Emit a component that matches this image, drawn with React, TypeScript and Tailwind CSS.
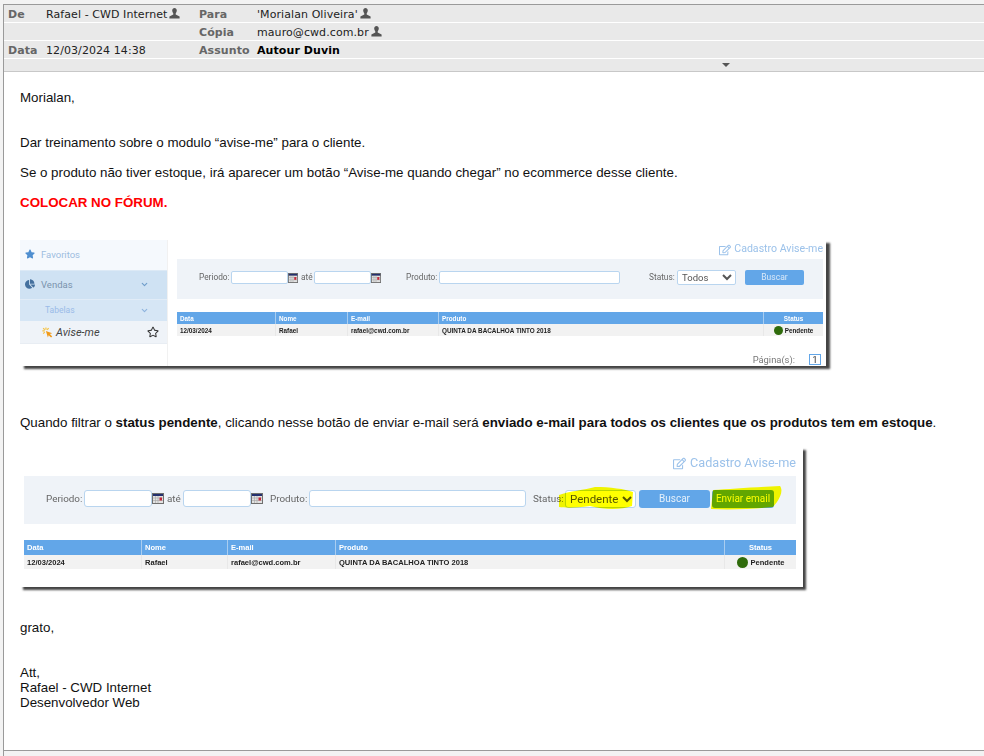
import { FaStar, FaRegStar, FaChartPie, FaRegEdit } from "react-icons/fa";
import { ChevronDown } from "lucide-react";

function UserIcon() {
  return (
    <svg width="11" height="11" viewBox="0 0 11 11" className="ml-[2px] mb-[2px] inline-block text-[#555]">
      <path
        d="M3.2 2.6C3.2 1 4.2 0 5.500 0s2.300 1 2.300 2.600c0 1.200-.6 2.200-1.100 2.800v1.100L10.600 8.400V10.600H.4V8.400L4.300 6.500V5.400C3.800 4.800 3.200 3.800 3.200 2.600z"
        fill="currentColor"
      />
    </svg>
  );
}

function CalendarIcon({ className }: { className: string }) {
  return (
    <svg viewBox="0 0 12 11" preserveAspectRatio="none" className={`shrink-0 ${className}`}>
      <rect x="0" y="0" width="12" height="11" fill="#6f6f6f" />
      <rect x="1" y="1" width="10" height="2" fill="#24306e" />
      <rect x="1" y="3" width="10" height="7" fill="#e2e2e2" />
      <path d="M1 5h10M1 7.500h10M3.500 3v7M6 3v7" stroke="#a5a5a5" strokeWidth="0.6" />
      <rect x="7.500" y="4.500" width="2.500" height="3" fill="#c4283a" />
    </svg>
  );
}

function ClickIcon() {
  return (
    <svg width="11" height="11" viewBox="0 0 14 14" className="shrink-0">
      <path
        d="M5 0.500v3M0.500 5h3M1.500 1.500l2 2M8.500 1.500l-2 2M1.500 8.500l2-2"
        stroke="#f5c242"
        strokeWidth="1.500"
        fill="none"
      />
      <path d="M5 5l8 3-3 1 3 3-1.500 1.500-3-3-1 3z" fill="#f09a1a" />
    </svg>
  );
}

function HeaderRow({
  label,
  value,
  label2,
  value2,
  user,
  user2,
  bold,
}: {
  label?: string;
  value?: string;
  label2: string;
  value2: string;
  user?: boolean;
  user2?: boolean;
  bold?: boolean;
}) {
  return (
    <div className="flex h-[18px] items-center border-b border-white bg-[#e9e9e9] pt-[1px] text-[11px] leading-none tracking-[0.08px]">
      <span className="w-[42px] pl-[4px] font-bold text-[#666]">{label}</span>
      <span className="w-[153px] whitespace-nowrap text-[#222]">
        {value}
        {user && <UserIcon />}
      </span>
      <span className="w-[58px] font-bold text-[#666]">{label2}</span>
      <span className={`whitespace-nowrap text-[#222] ${bold ? "font-bold text-black" : ""}`}>
        {value2}
        {user2 && <UserIcon />}
      </span>
    </div>
  );
}

type Column = { name: string; width: string };

function ResultTable({
  cols,
  text,
  head,
  row,
  dot,
  gap,
}: {
  cols: Column[];
  text: string;
  head: string;
  row: string;
  dot: string;
  gap: string;
}) {
  const cells = ["12/03/2024", "Rafael", "rafael@cwd.com.br", "QUINTA DA BACALHOA TINTO 2018"];
  return (
    <div className={`font-bold [font-family:'Liberation_Sans',Arial,sans-serif] ${text}`}>
      <div className={`flex bg-[#62a6e8] text-white ${head}`}>
        {cols.map((c, i) => (
          <div
            key={c.name}
            className={`flex items-center border-r border-[#a9cdf0] px-[3px] last:border-r-0 ${c.width} ${
              i === cols.length - 1 ? "justify-center" : ""
            }`}
          >
            {c.name}
          </div>
        ))}
      </div>
      <div className={`flex bg-[#f2f2f2] text-[#222] ${row}`}>
        {cols.map((c, i) => (
          <div
            key={c.name}
            className={`flex items-center whitespace-nowrap border-r border-[#e8e8e8] px-[3px] last:border-r-0 ${c.width} ${
              i === cols.length - 1 ? `justify-center ${gap}` : ""
            }`}
          >
            {i === cols.length - 1 ? (
              <>
                <span className={`rounded-full bg-[#2f6b0b] ${dot}`} />
                Pendente
              </>
            ) : (
              cells[i]
            )}
          </div>
        ))}
      </div>
    </div>
  );
}

function FirstShot() {
  return (
    <div className="flex h-[126px] w-[806px] bg-white shadow-[4px_3px_2px_#444] blur-[0.3px] [font-family:'Roboto',sans-serif]">
      <div className="w-[148px] shrink-0 border-r border-[#f1f1f1] text-[9.500px]">
        <div className="flex h-[30px] items-center gap-[5px] bg-[#f5f9fd] pb-[2px] pl-[5px] text-[#9dbde0]">
          <FaStar className="text-[10px] text-[#4f8fd0]" />
          <span className="ml-[1px]">Favoritos</span>
        </div>
        <div className="flex h-[29px] items-center gap-[6px] border-t border-[#dce9f5] bg-[#cfe2f3] pb-[2px] pl-[5px] pr-[18px] text-[#7a93ad]">
          <FaChartPie className="text-[10px] text-[#44709e]" />
          <span className="flex-1">Vendas</span>
          <ChevronDown size={9} strokeWidth={3} className="text-[#6f9dca]" />
        </div>
        <div className="flex h-[22px] items-center justify-between border-t border-[#e1ecf7] bg-[#d6e6f5] pl-[25px] pr-[18px] text-[8.500px] text-[#9abbe8]">
          <span>Tabelas</span>
          <ChevronDown size={9} strokeWidth={3} className="text-[#8db3dd]" />
        </div>
        <div className="flex h-[23px] items-center justify-between border-b border-[#e8edf3] bg-[#eff3f8] pl-[22px] pr-[8px] text-[11px] italic text-[#444]">
          <span className="flex items-center gap-[3px]">
            <ClickIcon />
            Avise-me
          </span>
          <FaRegStar className="text-[12px] not-italic text-[#333]" />
        </div>
      </div>
      <div className="flex-1 pl-[9px] pr-[3px]">
        <div className="flex h-[19px] items-center justify-end gap-[3px] text-[10.600px] leading-none text-[#9cc2ea]">
          <FaRegEdit className="text-[12px]" />
          <span>Cadastro Avise-me</span>
        </div>
        <div className="flex h-[40px] items-center bg-[#eff3f8] pb-[3px] text-[8.300px] text-[#666]">
          <span className="ml-[22px] w-[32px]">Periodo:</span>
          <input className="h-[13px] w-[57px] rounded-[2px] border border-[#b9d5ef] bg-white" />
          <CalendarIcon className="h-[10px] w-[10px]" />
          <span className="ml-[3px] w-[11px]">até</span>
          <input className="ml-[2px] h-[13px] w-[57px] rounded-[2px] border border-[#b9d5ef] bg-white" />
          <CalendarIcon className="h-[10px] w-[10px]" />
          <span className="ml-[25px] w-[33px]">Produto:</span>
          <input className="h-[13px] w-[181px] rounded-[2px] border border-[#b9d5ef] bg-white" />
          <span className="ml-[29px] w-[28px]">Status:</span>
          <select className="h-[15px] w-[59px] rounded-[2px] border border-[#b9d5ef] bg-white text-[9.500px] text-[#555]">
            <option>Todos</option>
          </select>
          <button className="ml-[9px] h-[15px] w-[59px] rounded-[2px] bg-[#62a6e8] text-[8.500px] text-[#d8e8f8]">Buscar</button>
        </div>
        <div className="mt-[13px]">
          <ResultTable
            text="text-[6.350px]"
            head="h-[12px]"
            row="h-[12px]"
            dot="h-[9px] w-[9px]"
            gap="gap-[2px]"
            cols={[
              { name: "Data", width: "w-[99px]" },
              { name: "Nome", width: "w-[72px]" },
              { name: "E-mail", width: "w-[91px]" },
              { name: "Produto", width: "w-[325px]" },
              { name: "Status", width: "w-[59px]" },
            ]}
          />
        </div>
        <div className="mt-[16px] flex items-center justify-end pr-[2px] text-[9.400px] text-[#777]">
          <span>Página(s):</span>
          <span className="ml-[14px] flex h-[11px] w-[12px] items-center justify-center border border-[#62a6e8] text-[9.500px] leading-none text-[#333]">1</span>
        </div>
      </div>
    </div>
  );
}

function SecondShot() {
  return (
    <div className="relative h-[140px] w-[783px] bg-white pl-[4px] pr-[7px] shadow-[3px_3px_2px_#444] blur-[0.3px] [font-family:'Roboto',sans-serif]">
      <div className="flex h-[29px] items-end justify-end gap-[4px] pb-[6px] text-[12.650px] leading-none text-[#9cc2ea]">
        <FaRegEdit className="text-[13px]" />
        <span>Cadastro Avise-me</span>
      </div>
      <div className="flex h-[48px] items-center bg-[#eff3f8] pb-[3px] text-[9.900px] text-[#666]">
        <span className="ml-[22px] w-[38px]">Periodo:</span>
        <input className="h-[17px] w-[68px] rounded-[3px] border border-[#b9d5ef] bg-white" />
        <CalendarIcon className="h-[11px] w-[12px]" />
        <span className="ml-[3px] w-[14px]">até</span>
        <input className="ml-[2px] h-[17px] w-[68px] rounded-[3px] border border-[#b9d5ef] bg-white" />
        <CalendarIcon className="h-[11px] w-[12px]" />
        <span className="ml-[7px] w-[39px]">Produto:</span>
        <input className="h-[17px] w-[217px] rounded-[3px] border border-[#b9d5ef] bg-white" />
        <span className="ml-[7px] w-[32px]">Status:</span>
        <select className="h-[18px] w-[71px] rounded-[3px] border border-[#b9d5ef] bg-white text-[11.500px] text-[#555]">
          <option>Pendente</option>
        </select>
        <button className="ml-[3px] h-[18px] w-[71px] rounded-[3px] bg-[#62a6e8] text-[10px] text-[#e4f0fb]">Buscar</button>
        <button className="ml-[2px] h-[18px] w-[62px] rounded-[3px] bg-[#62a6e8] text-[10px] text-white">Enviar email</button>
      </div>
      <div className="mt-[16px]">
        <ResultTable
          text="text-[7.550px]"
          head="h-[15px]"
          row="h-[14px]"
          dot="h-[11px] w-[11px]"
          gap="gap-[3px]"
          cols={[
            { name: "Data", width: "w-[118px]" },
            { name: "Nome", width: "w-[86px]" },
            { name: "E-mail", width: "w-[108px]" },
            { name: "Produto", width: "w-[389px]" },
            { name: "Status", width: "w-[71px]" },
          ]}
        />
      </div>
      {/* marca-texto amarelo por cima do select e do botao */}
      <svg
        width="240"
        height="40"
        viewBox="0 0 240 40"
        className="pointer-events-none absolute left-[535px] top-[35px] mix-blend-multiply"
      >
        <path d="M4 13C14 9 30 8 40 5 55 5 70 7 78 10L77 24C66 28 50 28 35 24 22 26 10 26 4 25Z" fill="#ffff00" />
        <path d="M158 8C175 7 200 5 225 4 228 8 226 14 222 20L218 25C200 27 175 28 156 27Z" fill="#ffff00" />
      </svg>
    </div>
  );
}

export default function App() {
  return (
    <div className="flex h-[756px] flex-col bg-[#f3f3f3] pl-[3px] pt-[4px] [font-family:'Liberation_Sans',Arial,sans-serif]">
      <div className="flex min-h-0 flex-1 flex-col border-l border-t border-[#9a9a9a] bg-white">
        <div className="[font-family:'DejaVu_Sans',sans-serif]">
          <HeaderRow label="De" value="Rafael - CWD Internet" user label2="Para" value2="'Morialan Oliveira'" user2 />
          <HeaderRow label2="Cópia" value2="mauro@cwd.com.br" user2 />
          <HeaderRow label="Data" value="12/03/2024 14:38" label2="Assunto" value2="Autour Duvin" bold />
          <div className="flex h-[13px] items-center border-b border-[#c8c8c8] bg-[#e9e9e9] pl-[718px]">
            <span className="h-0 w-0 border-x-[4px] border-t-[4px] border-x-transparent border-t-[#555]" />
          </div>
        </div>
        <div className="flex-1 pl-[16px] text-[13.330px] leading-[15px] text-[#111]">
          <p className="mt-[18px]">Morialan,</p>
          <p className="mt-[30px]">Dar treinamento sobre o modulo “avise-me” para o cliente.</p>
          <p className="mt-[15px]">Se o produto não tiver estoque, irá aparecer um botão “Avise-me quando chegar” no ecommerce desse cliente.</p>
          <p className="mt-[15px] font-bold text-[#f00]">COLOCAR NO FÓRUM.</p>
          <div className="mt-[30px]"><FirstShot /></div>
          <p className="mt-[49px]">
            Quando filtrar o <b>status pendente</b>, clicando nesse botão de enviar e-mail será <b>enviado e-mail para todos os clientes que os produtos tem em estoque</b>.
          </p>
          <div className="mt-[17px]"><SecondShot /></div>
          <p className="mt-[33px]">grato,</p>
          <p className="mt-[30px]">Att,</p>
          <p>Rafael - CWD Internet</p>
          <p>Desenvolvedor Web</p>
        </div>
        <div className="h-[6px] shrink-0 border-t border-[#9a9a9a] bg-[#f3f3f3]" />
      </div>
    </div>
  );
}
